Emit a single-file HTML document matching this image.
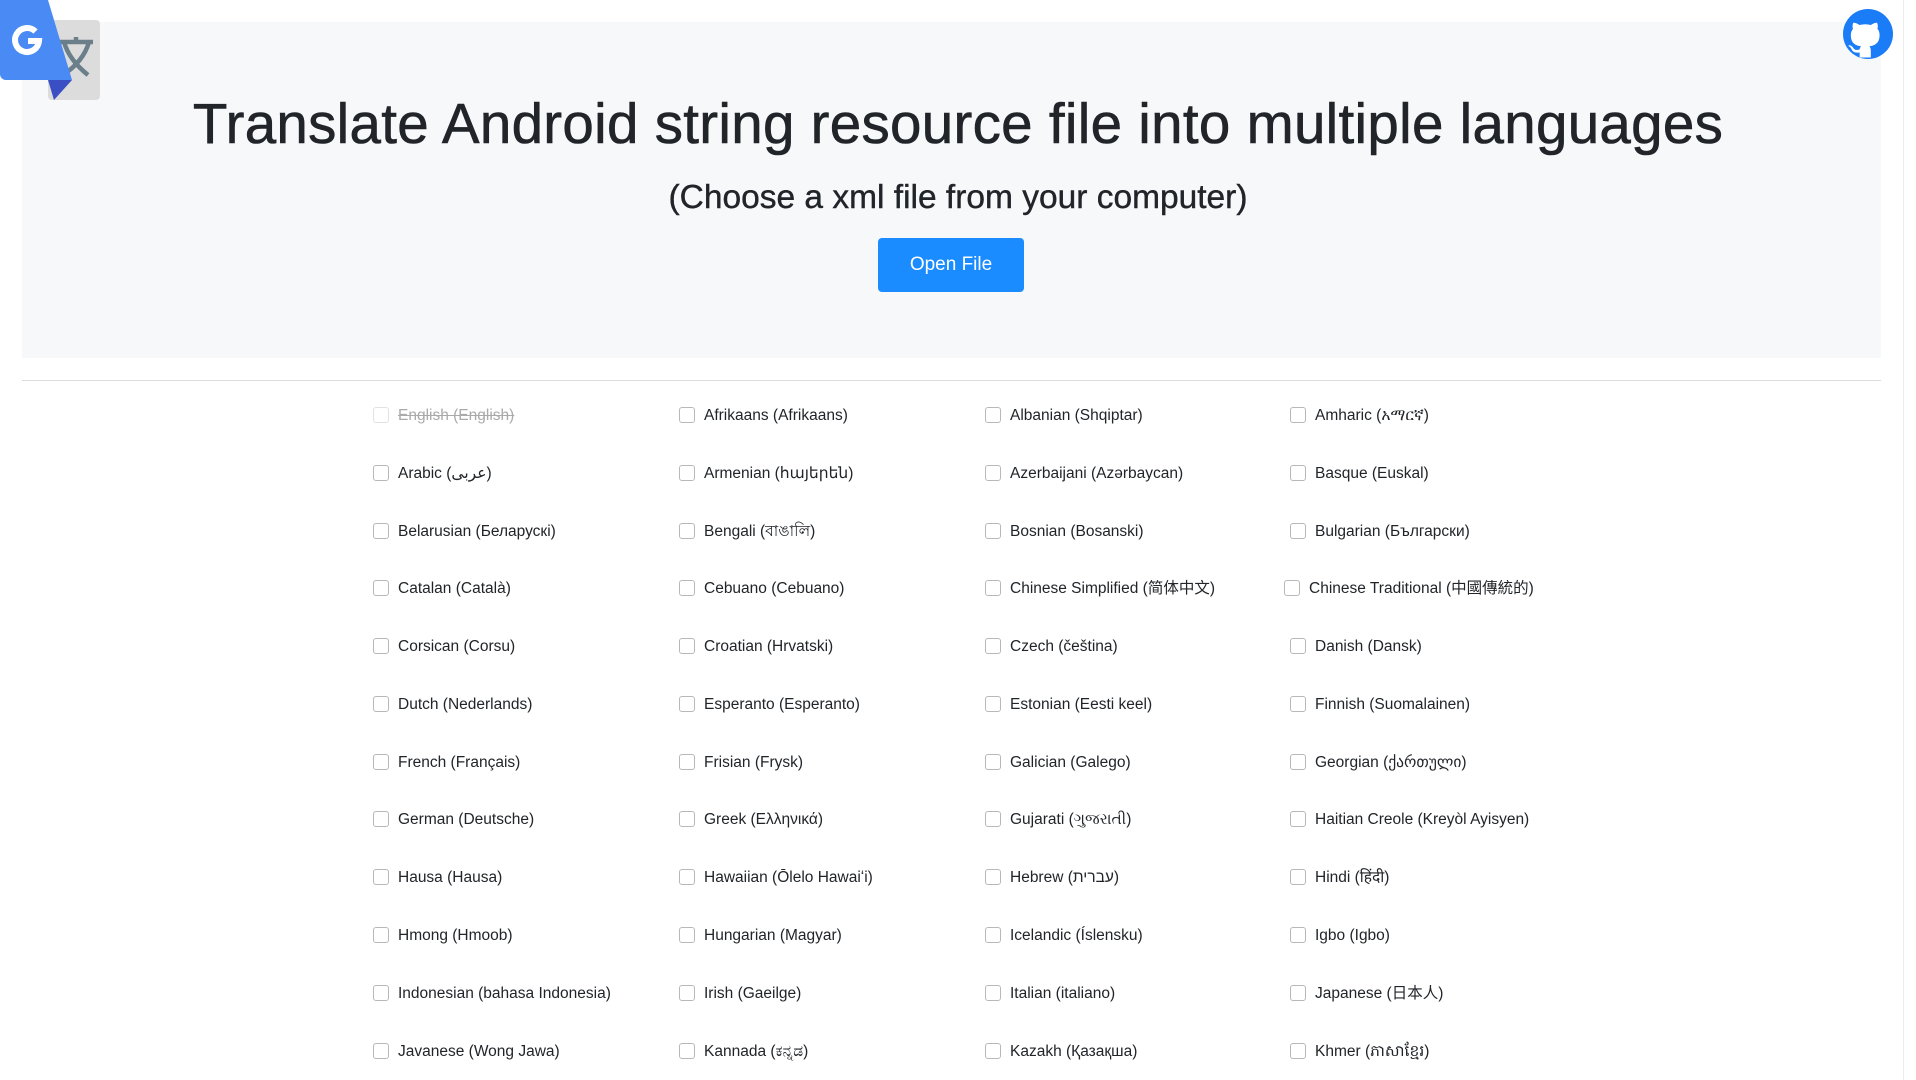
<!DOCTYPE html>
<html><head><meta charset="utf-8"><style>
*{box-sizing:border-box;margin:0;padding:0}
body{width:1916px;height:1080px;overflow:hidden;background:#fff;font-family:"Liberation Sans","Noto Sans CJK SC",sans-serif;color:#212529;position:relative}
.jumbo{position:absolute;left:22px;top:22px;width:1859px;height:336px;background:#f7f8fa}
h1{position:absolute;left:0;right:0;top:88px;text-align:center;font-size:56.5px;font-weight:normal;line-height:72px;color:#212529;letter-spacing:0.3px;-webkit-text-stroke:0.6px #212529}
h2{position:absolute;left:0;right:0;top:177px;text-align:center;font-size:33.5px;font-weight:normal;line-height:42px;-webkit-text-stroke:0.4px #212529}
.btn{position:absolute;left:878px;top:238px;width:146px;height:54px;background:#1a8cff;border-radius:4px;color:#fff;font-size:19px;line-height:54px;text-align:center}
.hr{position:absolute;left:22px;top:380px;width:1859px;height:1px;background:#dcdcdc}
.vl{position:absolute;left:1903px;top:0;width:1px;height:1080px;background:#ececec}
.it{position:absolute;font-size:15.5px;line-height:20px;height:20px;white-space:nowrap;color:#212529}
.it i{position:absolute;left:0;top:1px;width:16px;height:16px;border:1px solid #b8b8b8;border-radius:3px;background:#fff}
.it span{position:absolute;left:25px;top:0}
.dis i{border-color:#e2e2e2}.dis span{color:#aaa;text-decoration:line-through}
</style></head><body>
<div class="jumbo"></div>
<div class="vl"></div>
<svg style="position:absolute;left:0;top:0" width="102" height="102" viewBox="0 0 102 102">
<rect x="48" y="20" width="52" height="80" rx="4" fill="#dcdcdc"/>
<path d="M60 42h33M76 37v5M64 42c4 14 14 25 24 33M89 42c-4 14-14 25-26 33" stroke="#6a7f8a" stroke-width="4.5" fill="none"/>
<path d="M48 80l24 0-18 20z" fill="#3b4fc4"/>
<path d="M0 0h48l24 80H6a6 6 0 0 1-6-6z" fill="#4a8af4"/>
<path d="M35.5 31.5A12 12 0 1 0 39 41H28" stroke="#fff" stroke-width="6" fill="none"/>
</svg>
<svg style="position:absolute;left:1843px;top:9px" width="50" height="50" viewBox="0 0 16 16">
<circle cx="8" cy="8" r="8" fill="#1a7cf6"/>
<path fill="#fff" d="M5.3 15.5c.1-.7 0-1.3 0-1.6-2 .4-2.5-.9-2.5-.9-.3-.8-.8-1-.8-1-.6-.4.1-.4.1-.4.7.1 1.1.7 1.1.7.6 1.1 1.7.8 2.1.6.1-.5.3-.8.5-1-1.6-.2-3.3-.8-3.3-3.6 0-.8.3-1.4.7-2-.1-.2-.3-.9.1-1.9 0 0 .6-.2 2 .7a7 7 0 0 1 3.6 0c1.4-.9 2-.7 2-.7.4 1 .2 1.7.1 1.9.5.5.7 1.2.7 2 0 2.8-1.7 3.4-3.3 3.6.3.2.5.7.5 1.4v2.2z"/>
</svg>
<h1>Translate Android string resource file into multiple languages</h1>
<h2>(Choose a xml file from your computer)</h2>
<div class="btn">Open File</div>
<div class="hr"></div>
<div id="g"></div>
<script>
var L=["English (English)","Afrikaans (Afrikaans)","Albanian (Shqiptar)","Amharic (አማርኛ)","Arabic (عربى)","Armenian (հայերեն)","Azerbaijani (Azərbaycan)","Basque (Euskal)","Belarusian (Беларускі)","Bengali (বাঙালি)","Bosnian (Bosanski)","Bulgarian (Български)","Catalan (Català)","Cebuano (Cebuano)","Chinese Simplified (简体中文)","Chinese Traditional (中國傳統的)","Corsican (Corsu)","Croatian (Hrvatski)","Czech (čeština)","Danish (Dansk)","Dutch (Nederlands)","Esperanto (Esperanto)","Estonian (Eesti keel)","Finnish (Suomalainen)","French (Français)","Frisian (Frysk)","Galician (Galego)","Georgian (ქართული)","German (Deutsche)","Greek (Ελληνικά)","Gujarati (ગુજરાતી)","Haitian Creole (Kreyòl Ayisyen)","Hausa (Hausa)","Hawaiian (Ōlelo Hawaiʻi)","Hebrew (עברית)","Hindi (हिंदी)","Hmong (Hmoob)","Hungarian (Magyar)","Icelandic (Íslensku)","Igbo (Igbo)","Indonesian (bahasa Indonesia)","Irish (Gaeilge)","Italian (italiano)","Japanese (日本人)","Javanese (Wong Jawa)","Kannada (ಕನ್ನಡ)","Kazakh (Қазақша)","Khmer (ភាសាខ្មែរ)"];
var X=[373,679,985,1290],h="";
L.forEach(function(t,i){var r=Math.floor(i/4),c=i%4,x=X[c];if(i==15)x=1284;
h+='<div class="it'+(i==0?' dis':'')+'" style="left:'+x+'px;top:'+Math.round(406+r*57.78)+'px"><i></i><span>'+t+'</span></div>';});
document.getElementById("g").innerHTML=h;
</script>
</body></html>
